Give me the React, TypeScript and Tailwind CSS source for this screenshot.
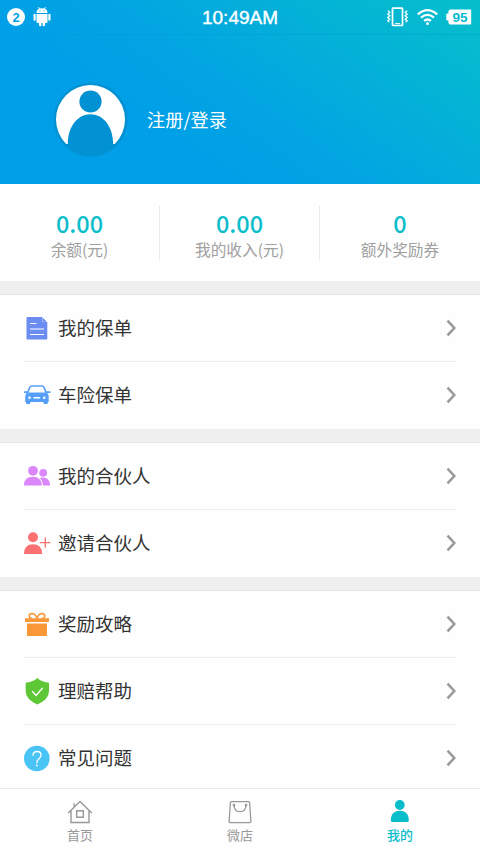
import type { ReactNode } from 'react';

const DocIcon = () => (
  <svg width="28" height="28" viewBox="0 0 28 28">
    <path d="M4.500 3h14.800v5h5v16.500a1 1 0 0 1-1 1H4.500a1 1 0 0 1-1-1V4a1 1 0 0 1 1-1z" fill="#6b8cf0" />
    <path d="M19.500 3.500 24 7.800h-4.500z" fill="#6b8cf0" />
    <path d="M7 9.500h6.500M7 15h14M7 20.500h14" stroke="#fff" strokeWidth="1.200" />
  </svg>
);

const CarIcon = () => (
  <svg width="28" height="28" viewBox="0 0 28 28" fill="#569ff8">
    <path d="M4.300 12.500 6.700 6.500Q7.300 5 8.800 5h10.200q1.500 0 2.100 1.500L23.500 12.500" fill="none" stroke="#569ff8" strokeWidth="1.700" />
    <path d="M1 10.300h3.700v1.600H1zM23 10.300h4.500v1.600H23z" />
    <path fillRule="evenodd" d="M4.500 11.500h18.500q2.700 1 2.700 4.300V21H2.200v-5.200q0-3.300 2.300-4.300zM6.500 15.400a1.300 1.300 0 1 0 0 2.600 1.300 1.300 0 0 0 0-2.600zM21.200 15.400a1.300 1.300 0 1 0 0 2.600 1.300 1.300 0 0 0 0-2.600zM10.500 16v1.400h6.600V16z" />
    <path d="M3 20h4.300v2q0 1-1 1H4q-1 0-1-1zM20.500 20h4.300v2q0 1-1 1h-2.300q-1 0-1-1z" />
  </svg>
);

const PartnersIcon = () => (
  <svg width="28" height="28" viewBox="0 0 28 28" fill="#dc86fb">
    <circle cx="10" cy="8.800" r="4.900" />
    <path d="M1 23.500q0-8.700 9-8.700 8.500 0 8.800 8.700z" />
    <circle cx="20.200" cy="10.800" r="3.900" />
    <path d="M20 23.500q-.2-4.800-3.400-7.500 10-2.200 10.600 7.500z" />
  </svg>
);

const InviteIcon = () => (
  <svg width="28" height="28" viewBox="0 0 28 28" fill="#fb7171">
    <circle cx="10" cy="8.200" r="5" />
    <path d="M1 25q0-9.800 9-9.800T19.200 25z" />
    <path d="M16.800 13.600H27.300M22.300 8.400v10.400" stroke="#fb7171" strokeWidth="1.300" />
  </svg>
);

const GiftIcon = () => (
  <svg width="28" height="28" viewBox="0 0 28 28" fill="#fa9838">
    <path d="M2 8.200h24v3.900H2zM4 13.600h20V26H4z" />
    <path d="M14 8.300Q12.500 3.500 8.500 3.500 5.800 4 6.200 6.500q.5 2 3 1.800M14 8.300q1.500-4.800 5.500-4.800Q22.200 4 21.800 6.500q-.5 2-3 1.800" fill="none" stroke="#fa9838" strokeWidth="1.500" />
  </svg>
);

const ShieldIcon = () => (
  <svg width="28" height="28" viewBox="0 0 28 28">
    <path d="M14.300 1q4.700 4.300 11.700 4.800v8.500q0 8-11.700 13.200Q2.700 22.300 2.700 14.300V5.800Q9.600 5.300 14.300 1z" fill="#5dc735" />
    <path d="m9.200 14.300 3.900 4.200 6.500-7.500" fill="none" stroke="#fff" strokeWidth="1.400" />
  </svg>
);

const HelpIcon = () => (
  <svg width="28" height="28" viewBox="0 0 28 28">
    <circle cx="13.800" cy="14.500" r="12.800" fill="#49c4f5" />
    <path d="M10 11.700q0-4.200 4-4.200t4 3.800q0 1.800-2.200 3.600-2 1.600-2 3.500v.8" fill="none" stroke="#fff" strokeWidth="1.300" />
    <circle cx="13.800" cy="21.500" r=".9" fill="#fff" />
  </svg>
);

const Chevron = () => (
  <svg width="10" height="18" viewBox="0 0 10 18" fill="none" stroke="#999" strokeWidth="2.500">
    <path d="m1.500 1.700 6.800 7.300-6.800 7.300" />
  </svg>
);

function Row({ icon, label, last }: { icon: ReactNode; label: string; last?: boolean }) {
  return (
    <div className={`mx-6 flex h-[67px] shrink-0 items-center border-b ${last ? 'border-transparent' : 'border-[#ededed]'}`}>
      <span className="-ml-px w-[35px]">{icon}</span>
      <span className="flex-1 pb-px text-[18.500px] leading-none text-[#333]">{label}</span>
      <Chevron />
    </div>
  );
}

const Gap = () => <div className="h-[14px] shrink-0 border-b border-[#e6e6e6] bg-[#efefef]" />;

function Stat({ value, label, divider }: { value: string; label: string; divider?: boolean }) {
  return (
    <div className={`flex h-[54px] w-40 flex-col items-center ${divider ? 'border-r border-[#ebebeb]' : ''}`}>
      <span className="mt-[5px] text-[23.500px] font-medium leading-[24px] text-[#09bdcb]">{value}</span>
      <span className="mt-[7px] text-[15.700px] leading-[16px] text-[#a0a0a0]">{label}</span>
    </div>
  );
}

function Tab({ icon, label, active }: { icon: ReactNode; label: string; active?: boolean }) {
  return (
    <div className={`flex w-40 flex-col items-center pt-[10px] ${active ? 'font-medium text-[#09bdcb]' : 'text-[#999]'}`}>
      {icon}
      <span className="mt-[2px] text-[13px] leading-[16px]">{label}</span>
    </div>
  );
}

function StatusBar() {
  return (
    <div className="grid h-[35px] grid-cols-3 items-center border-b border-[#009cd0]/50 text-white">
      <div className="flex items-center gap-[8px] pl-[7px]">
        <svg width="18" height="18" viewBox="0 0 18 18">
          <circle cx="9" cy="9" r="9" fill="#fff" />
          <text x="9" y="13.600" textAnchor="middle" fontFamily="Liberation Sans, sans-serif" fontWeight="bold" fontSize="13" fill="#049fe6">2</text>
        </svg>
        <svg width="18" height="20" viewBox="0 0 18 20" fill="#fff">
          <path fillRule="evenodd" d="M3.500 6Q3.500 2.800 6.200 1.700L5 .4 5.600 0 7 1.400q2-.5 4 0L12.400 0l.6.4-1.200 1.300Q14.500 2.800 14.500 6zM6.500 3.300v1h1v-1zM10.500 3.300v1h1v-1z" />
          <path d="M3.500 7h11v8q0 1-1 1H12v2.200q0 1-1.200 1t-1.200-1V16H8.400v2.200q0 1-1.200 1T6 18.200V16H4.500q-1 0-1-1z" />
          <rect x=".5" y="6.800" width="2.200" height="7" rx="1.100" />
          <rect x="15.300" y="6.800" width="2.200" height="7" rx="1.100" />
        </svg>
      </div>
      <span className="whitespace-nowrap text-center font-['Liberation_Sans',sans-serif] text-[19px] leading-none [-webkit-text-stroke:0.400px_white]">10:49AM</span>
      <div className="flex items-center justify-end pr-[8px]">
        <svg width="21" height="20" viewBox="0 0 21 20" fill="none" stroke="#fff">
          <rect x="5.500" y="1.200" width="10" height="17.300" rx=".6" strokeWidth="1.700" />
          <path d="M8 16.600h5" strokeWidth="1" />
          <path d="m.8 3.800 2 1.500-2 1.800 2 1.700-2 1.700 2 1.700-2 1.700 1.500 1.200M20.200 3.800l-2 1.500 2 1.800-2 1.700 2 1.700-2 1.700 2 1.700-1.500 1.200" strokeWidth="1.300" />
        </svg>
        <svg className="ml-[9px]" width="21" height="18" viewBox="0 0 21 18" fill="none" stroke="#fff" strokeWidth="2.200">
          <path d="M.8 6.300q9.700-8.500 19.400 0M4 9.700q6.500-5.500 13 0M7.100 12.900q3.400-2.800 6.800 0" />
          <circle cx="10.500" cy="15.500" r="1.500" fill="#fff" stroke="none" />
        </svg>
        <svg className="ml-[8px]" width="26" height="16" viewBox="0 0 26 16">
          <path d="M4.200.5h20q1 0 1 1v13q0 1-1 1h-20q-1.500 0-1.800-2v-2H1.300Q.3 11.500.3 10.500v-5q0-1 1-1h1.100v-2q.3-2 1.800-2z" fill="#fff" />
          <text x="14" y="12.700" textAnchor="middle" fontFamily="Liberation Sans, sans-serif" fontWeight="bold" fontSize="13.500" fill="#06b9cf">95</text>
        </svg>
      </div>
    </div>
  );
}

function Avatar() {
  return (
    <svg width="76" height="76" viewBox="0 0 76 76">
      <circle cx="37.600" cy="37.700" r="37" fill="#0291d2" />
      <path d="M13.200 62A34.500 34.500 0 1 1 61.800 62H60.200C60 44 50 32.300 37.500 32.300S15 44 14.800 62z" fill="#fff" />
      <circle cx="37.500" cy="19.500" r="11.100" fill="#0291d2" />
    </svg>
  );
}

export default function App() {
  return (
    <div className="flex h-[853px] w-[480px] flex-col overflow-hidden bg-[#fefefe] font-['Noto_Sans_CJK_SC',sans-serif]">
      <header className="h-[184px] shrink-0 bg-[linear-gradient(35deg,#009fe8_30%,#02a4e3_48%,#06bfcb_100%)]">
        <StatusBar />
        <div className="flex items-start pl-[53px] pt-[47px]">
          <Avatar />
          <span className="ml-[18px] mt-[27px] text-[18.200px] leading-[20px] text-white">注册/登录</span>
        </div>
      </header>
      <section className="flex h-[97px] shrink-0 pt-[22px]">
        <Stat value="0.00" label="余额(元)" divider />
        <Stat value="0.00" label="我的收入(元)" divider />
        <Stat value="0" label="额外奖励券" />
      </section>
      <main className="flex h-[507px] shrink-0 flex-col overflow-hidden">
        <Gap />
        <Row icon={<DocIcon />} label="我的保单" />
        <Row icon={<CarIcon />} label="车险保单" last />
        <Gap />
        <Row icon={<PartnersIcon />} label="我的合伙人" />
        <Row icon={<InviteIcon />} label="邀请合伙人" last />
        <Gap />
        <Row icon={<GiftIcon />} label="奖励攻略" />
        <Row icon={<ShieldIcon />} label="理赔帮助" />
        <Row icon={<HelpIcon />} label="常见问题" last />
      </main>
      <nav className="flex h-[65px] shrink-0 border-t border-[#e9e9e9]">
        <Tab
          label="首页"
          icon={
            <svg width="26" height="26" viewBox="0 0 26 26" fill="none" stroke="#999" strokeWidth="1.400">
              <path d="M1.200 14 13 2.500 24.800 14M4 11.700v11.800h18V11.700M7.200 8V4.200" />
              <path d="M9.700 11.700h6.600v6.600H9.700z" />
            </svg>
          }
        />
        <Tab
          label="微店"
          icon={
            <svg width="26" height="26" viewBox="0 0 26 26" fill="none" stroke="#999" strokeWidth="1.300">
              <path d="M4.500 2.600h17q1 0 1.100 1l1.300 18.700q0 1.300-1.200 1.300H3.300q-1.200 0-1.200-1.300L3.400 3.600q.1-1 1.100-1z" />
              <path d="M7 6.500q.5 6.200 6 6.200t6-6.200" />
              <circle cx="7" cy="6.200" r=".7" fill="#999" />
              <circle cx="19" cy="6.200" r=".7" fill="#999" />
            </svg>
          }
        />
        <Tab
          label="我的"
          active
          icon={
            <svg width="26" height="26" viewBox="0 0 26 26" fill="#09bdcb">
              <circle cx="12.800" cy="6" r="4.900" />
              <path d="M3.800 21.200C3.800 14.800 7.800 11.800 12.800 11.800s9 3 9 9.400q0 1.800-1.200 1.800H5Q3.800 23 3.800 21.200z" />
            </svg>
          }
        />
      </nav>
    </div>
  );
}
